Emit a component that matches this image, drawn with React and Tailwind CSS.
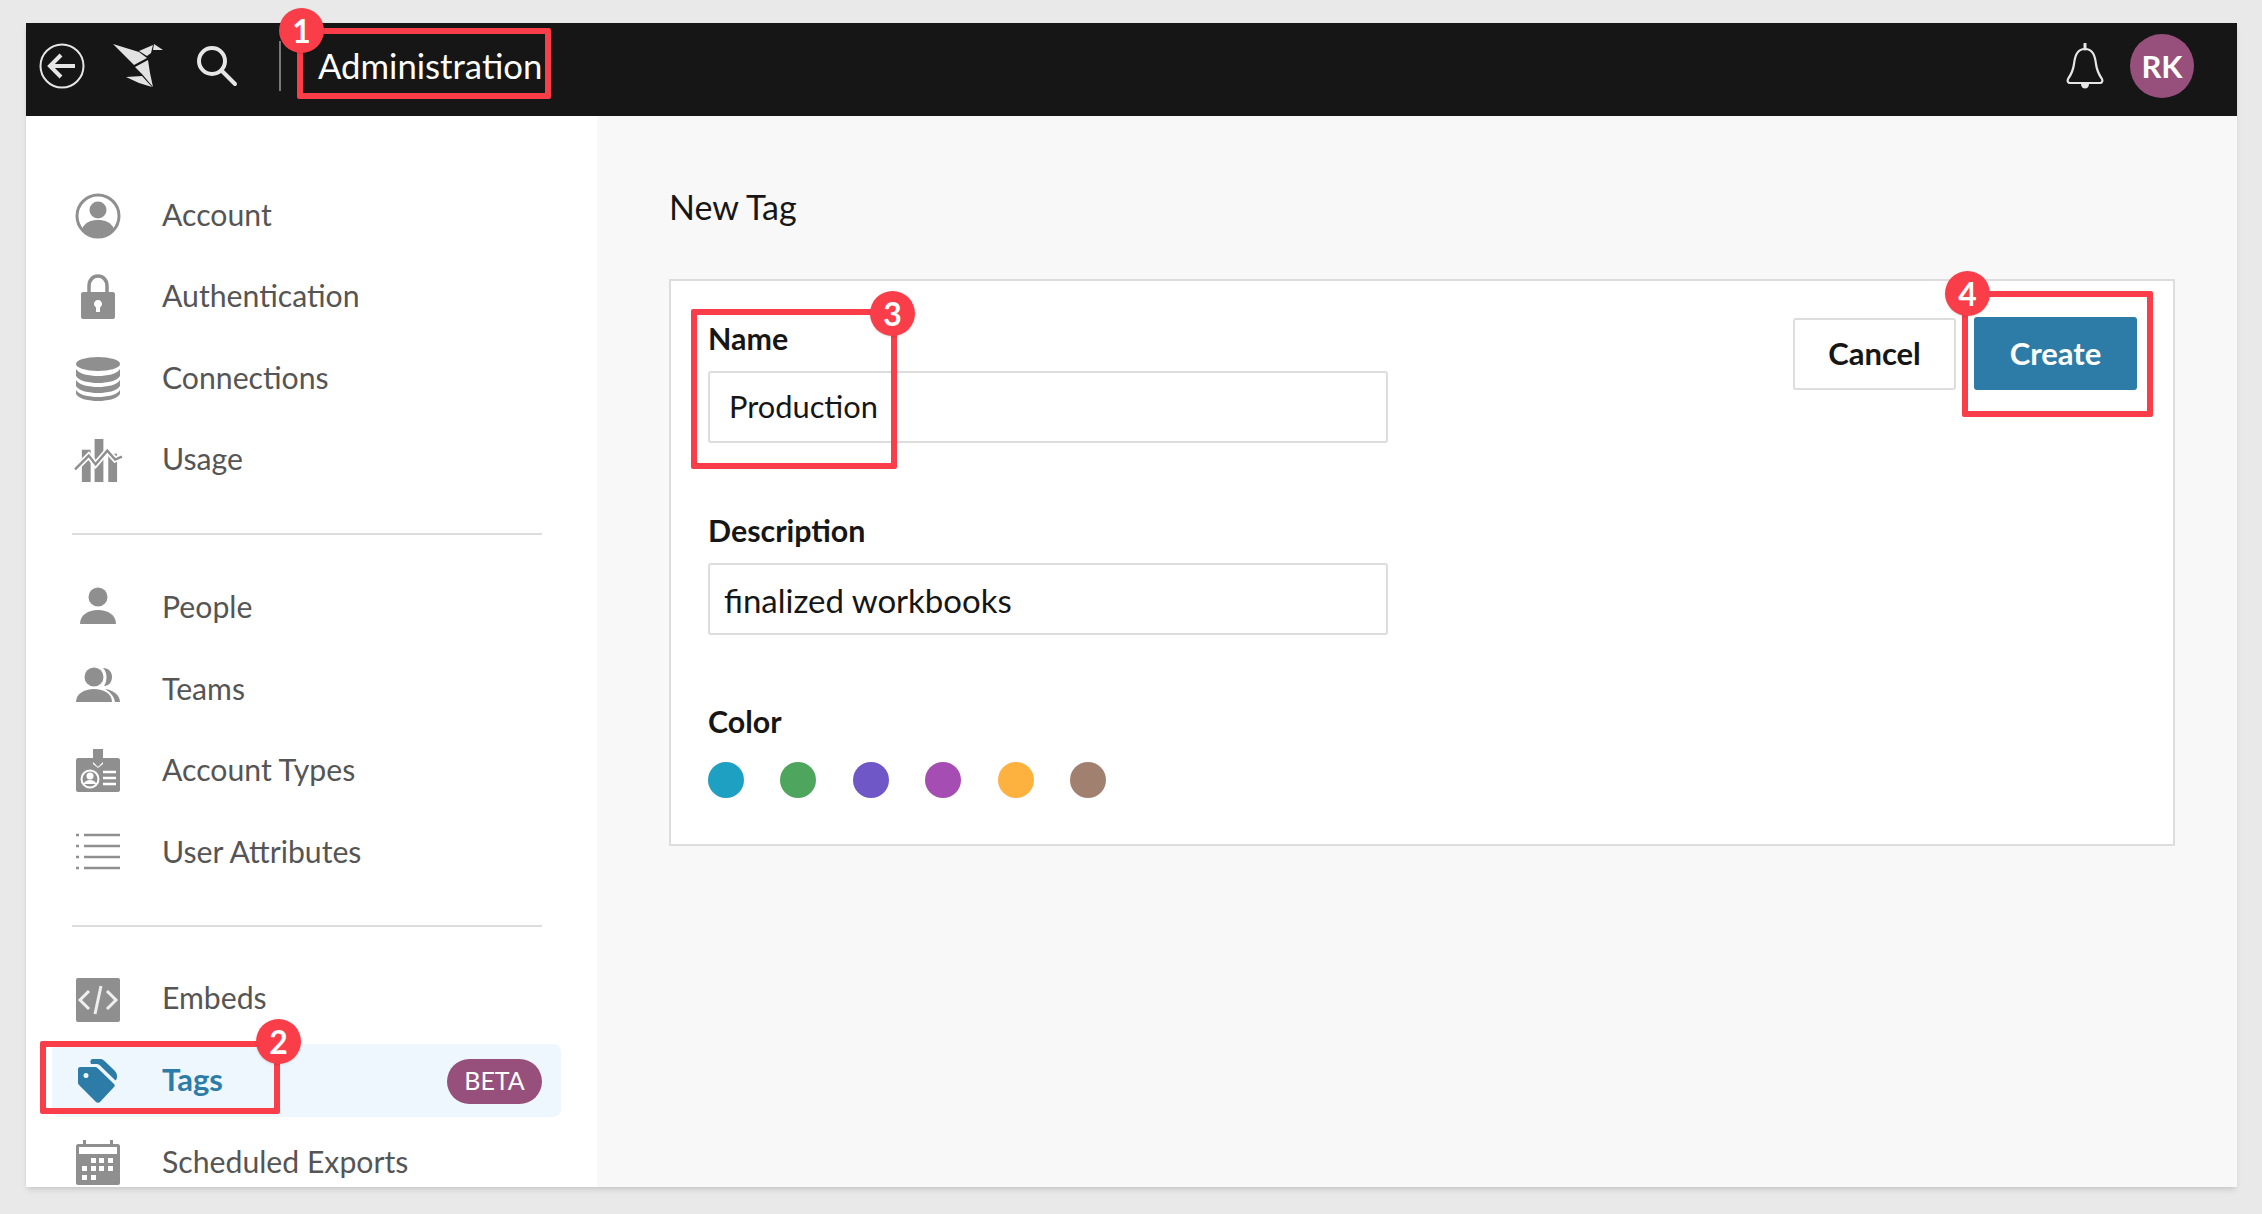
import React from 'react';

const FONT = "font-['Lato',sans-serif]";

const BackIcon = () => (
  <svg width="46" height="46" viewBox="0 0 46 46" fill="none" stroke="#e6e6e6">
    <circle cx="23" cy="23" r="21.5" strokeWidth="2" />
    <path d="M36 23H12M22 12L11 23L22 34" strokeWidth="4" />
  </svg>
);

const Logo = () => (
  <svg width="52" height="46" viewBox="0 0 52 46" fill="#e2e2e2">
    <path d="M1 1L27 9L35 15L22 22Z" />
    <path d="M27 8L41 2L39 10L35 13Z" />
    <path d="M42 1L51 7L41 7Z" />
    <path d="M23 24L36 17L38 30L41 44L30 31Z" />
    <path d="M14 34L30 33L40 44L27 40Z" />
  </svg>
);

const SearchIcon = () => (
  <svg width="42" height="42" viewBox="0 0 42 42" fill="none" stroke="#e6e6e6" strokeWidth="4" strokeLinecap="round">
    <circle cx="16" cy="16" r="13" />
    <path d="M26 26L39 39" />
  </svg>
);

const BellIcon = () => (
  <svg width="38" height="46" viewBox="0 0 38 46" fill="none" stroke="#e6e6e6" strokeWidth="2.2">
    <path d="M19 6C11 6 9 13 8 21C7 29 4 33 2 36C1 38 2 40 4 40H34C36 40 37 38 36 36C34 33 31 29 30 21C29 13 27 6 19 6Z" />
    <path d="M19 1V6" strokeWidth="3" strokeLinecap="round" />
    <path d="M15 41C15 47 23 47 23 41Z" fill="#e6e6e6" stroke="none" />
  </svg>
);

const AccountIcon = () => (
  <svg viewBox="0 0 46 46" className="w-[46px] h-[46px]">
    <circle cx="23" cy="23" r="21" fill="none" stroke="#8f8f8f" strokeWidth="3" />
    <circle cx="23" cy="17" r="8.5" fill="#8f8f8f" />
    <path d="M7 36C10 29 16 27 23 27C30 27 36 29 39 36C35 41 29 44 23 44C17 44 11 41 7 36Z" fill="#8f8f8f" />
  </svg>
);

const LockIcon = () => (
  <svg viewBox="0 0 46 46" className="w-[46px] h-[46px]">
    <path d="M14 20V12C14 6 18 2 23 2C28 2 32 6 32 12V20" fill="none" stroke="#8f8f8f" strokeWidth="3.5" />
    <path fillRule="evenodd" d="M8 18H38C39 18 40 19 40 20V43C40 44 39 45 38 45H8C7 45 6 44 6 43V20C6 19 7 18 8 18ZM23 26C20.500 26 19 28 19 30C19 31.500 20 32.800 21 33.400V38H25V33.400C26 32.800 27 31.500 27 30C27 28 25.500 26 23 26Z" fill="#8f8f8f" />
  </svg>
);

const DbIcon = () => (
  <svg viewBox="0 0 46 46" className="w-[46px] h-[46px]" fill="#8f8f8f">
    <ellipse cx="23" cy="8" rx="22" ry="7" />
    <path d="M1 13C4 18 14 20 23 20C32 20 42 18 45 13V20C42 25 32 27 23 27C14 27 4 25 1 20Z" />
    <path d="M1 24C4 29 14 31 23 31C32 31 42 29 45 24V30C42 35 32 37 23 37C14 37 4 35 1 30Z" />
    <path d="M1 34C4 39 14 41 23 41C32 41 42 39 45 34V38C42 43 32 45 23 45C14 45 4 43 1 38Z" />
  </svg>
);

const UsageIcon = () => (
  <svg viewBox="0 0 50 46" className="w-[49px] h-[45px] shrink-0">
    <g fill="#8f8f8f">
      <rect x="8" y="12" width="9" height="33" />
      <rect x="21" y="1" width="9" height="44" />
      <rect x="35" y="16" width="9" height="29" />
    </g>
    <path d="M1 32L15 18L22 27L34 13L42 22L49 19" fill="none" stroke="#fff" strokeWidth="6" />
    <path d="M1 32L15 18L22 27L34 13L42 22L49 19" fill="none" stroke="#8f8f8f" strokeWidth="2.500" />
  </svg>
);

const PersonIcon = () => (
  <svg viewBox="0 0 46 46" className="w-[46px] h-[46px]" fill="#8f8f8f">
    <circle cx="23" cy="12" r="9.500" />
    <path d="M5 39C5 30 13 25 23 25C33 25 41 30 41 39Z" />
  </svg>
);

const TeamsIcon = () => (
  <svg viewBox="0 0 46 46" className="w-[46px] h-[46px]" fill="#8f8f8f">
    <circle cx="19" cy="10" r="9.500" />
    <path d="M28 1C34 1 37 5 37 10C37 15 34 19 29 19C32 15 33 6 28 1Z" />
    <path d="M1 35C1 27 9 22 19 22C29 22 37 27 37 35Z" />
    <path d="M30 22C38 23 45 28 45 35H40C39 29 35 25 30 22Z" />
  </svg>
);

const BadgeIcon = () => (
  <svg viewBox="0 0 46 46" className="w-[46px] h-[46px]">
    <path fillRule="evenodd" fill="#8f8f8f" d="M3 10H18V16L23 20L28 16V10H43C44 10 45 11 45 12V42C45 43 44 44 43 44H3C2 44 1 43 1 42V12C1 11 2 10 3 10Z" />
    <path d="M18 1H28V14L23 19L18 14Z" fill="#8f8f8f" />
    <circle cx="15" cy="31" r="8.500" fill="none" stroke="#fff" strokeWidth="2" />
    <circle cx="15" cy="28" r="3.500" fill="#fff" />
    <path d="M8.500 36C10 33 12 32 15 32C18 32 20 33 21.500 36Z" fill="#fff" />
    <path d="M28 24H41M28 30H41M28 36H41" stroke="#fff" strokeWidth="2.500" />
  </svg>
);

const ListIcon = () => (
  <svg viewBox="0 0 46 46" className="w-[46px] h-[46px]" stroke="#8f8f8f" strokeWidth="2.500">
    <path d="M9 5H45M9 16H45M9 27H45M9 38H45" />
    <path d="M1 5H4M1 16H4M1 27H4M1 38H4" />
  </svg>
);

const EmbedIcon = () => (
  <svg viewBox="0 0 46 46" className="w-[46px] h-[46px]">
    <rect x="1" y="1" width="44" height="44" rx="2" fill="#8f8f8f" />
    <path d="M14 14L5 23L14 32M32 14L41 23L32 32M26 9L20 37" fill="none" stroke="#efefef" strokeWidth="3" />
  </svg>
);

const TagIcon = () => (
  <svg viewBox="0 0 46 46" className="w-[46px] h-[46px]" fill="#2d7ca8">
    <path fillRule="evenodd" d="M5 9H20C21 9 22 9.500 22.500 10L39 26C40 27 40 28 39 29L25 44C24 45 22 45 21 44L5 28C4 27 3 26 3 25V11C3 10 4 9 5 9ZM11 15A2.500 2.500 0 1 0 11 20A2.500 2.500 0 1 0 11 15Z" />
    <path d="M17 1H26C27 1 28 1.500 29 2.500L39 12C41 14 42 16 42 18C42 20 42 21 40.500 22.500L25 7.500C24 6.500 23 6 21 6H16C15 4 15 2 17 1Z" />
  </svg>
);

const CalendarIcon = () => (
  <svg viewBox="0 0 46 46" className="w-[46px] h-[46px]">
    <path d="M8 0H11V4H35V0H38V4H43C44 4 45 5 45 6V43C45 44 44 45 43 45H3C2 45 1 44 1 43V6C1 5 2 4 3 4H8Z" fill="#8f8f8f" />
    <rect x="4" y="7" width="38" height="7" fill="#fff" />
    <g fill="#fff">
      <rect x="16" y="18" width="5" height="5" />
      <rect x="24" y="18" width="5" height="5" />
      <rect x="33" y="18" width="5" height="5" />
      <rect x="7" y="26" width="5" height="5" />
      <rect x="16" y="26" width="5" height="5" />
      <rect x="24" y="26" width="5" height="5" />
      <rect x="33" y="26" width="5" height="5" />
      <rect x="7" y="35" width="5" height="5" />
      <rect x="16" y="35" width="5" height="5" />
    </g>
  </svg>
);

const NavRow = ({ icon, label }) => (
  <div className="h-[81.6px] flex items-center">
    <div className="w-[46px] ml-[49px] flex justify-center shrink-0">{icon}</div>
    <span className="ml-[41px] pb-[3px] text-[30.2px] text-[#555555]">{label}</span>
  </div>
);

const Divider = ({ className }) => <div className={`h-[2px] bg-[#dddddd] ml-[46px] mr-[55px] mb-[32px] ${className}`} />;

const Field = ({ label, value, inset, className }) => (
  <div className={className}>
    <div className="text-[30.4px] font-bold text-[#161616] leading-[40px]">{label}</div>
    <div className={`mt-[13px] w-[680px] h-[72px] border-2 border-[#dddddd] rounded-[3px] bg-white flex items-center text-[#161616] ${inset}`}>
      {value}
    </div>
  </div>
);

const Note = ({ n, className }) => (
  <div className={`absolute w-[45px] h-[45px] rounded-full bg-[#f93e4a] text-white text-[32px] font-bold flex items-center justify-center shadow-sm ${className}`}>
    {n}
  </div>
);

const NoteBox = ({ className }) => (
  <div className={`absolute border-[6px] border-[#f93e4a] rounded-[2px] ${className}`} />
);

const App = () => {
  return (
    <div className={`${FONT} relative w-[2262px] h-[1214px] bg-[#e9e9e9] pt-[23px] pl-[26px] overflow-hidden`}>
      <div className="w-[2211px] h-[1164px] flex flex-col overflow-hidden shadow-md">
        <header className="h-[93px] shrink-0 bg-[#161616] flex items-center pb-[7px] pl-[13px] pr-[43px]">
          <BackIcon />
          <div className="ml-[27px]"><Logo /></div>
          <div className="ml-[32px]"><SearchIcon /></div>
          <div className="ml-[41px] w-[2px] h-[50px] bg-[#777777]" />
          <span className="ml-[37px] text-[34.7px] text-white">Administration</span>
          <div className="ml-auto"><BellIcon /></div>
          <div className="ml-[26px] w-[64px] h-[64px] rounded-full bg-[#96507b] flex items-center justify-center text-white text-[31px] font-bold">RK</div>
        </header>
        <div className="flex flex-1 min-h-0">
          <aside className="w-[571px] shrink-0 bg-white pt-[59px] overflow-hidden">
            <NavRow icon={<AccountIcon />} label="Account" />
            <NavRow icon={<LockIcon />} label="Authentication" />
            <NavRow icon={<DbIcon />} label="Connections" />
            <NavRow icon={<UsageIcon />} label="Usage" />
            <Divider className="mt-[32px]" />
            <NavRow icon={<PersonIcon />} label="People" />
            <NavRow icon={<TeamsIcon />} label="Teams" />
            <NavRow icon={<BadgeIcon />} label="Account Types" />
            <NavRow icon={<ListIcon />} label="User Attributes" />
            <Divider className="mt-[31px]" />
            <NavRow icon={<EmbedIcon />} label="Embeds" />
            <div className="h-[81.6px] flex items-center relative">
              <div className="absolute left-[26px] right-[36px] top-[4px] h-[73px] bg-[#eef7fe] rounded-[8px]" />
              <div className="relative w-[46px] ml-[49px] flex justify-center shrink-0"><TagIcon /></div>
              <span className="relative ml-[41px] pb-[3px] text-[31px] font-bold text-[#2d7ca8]">Tags</span>
              <span className="relative ml-auto mr-[55px] w-[95px] h-[45px] rounded-full bg-[#96507b] text-white text-[25px] flex items-center justify-center">BETA</span>
            </div>
            <NavRow icon={<CalendarIcon />} label="Scheduled Exports" />
          </aside>
          <main className="flex-1 bg-[#f8f8f8] pl-[72px] pr-[62px] pt-[68px]">
            <h1 className="text-[34px] leading-[46px] text-[#161616]">New Tag</h1>
            <section className="mt-[49px] h-[567px] bg-white border-2 border-[#dddddd] relative pl-[37px] pt-[37px]">
              <Field label="Name" value="Production" inset="pl-[19px] text-[30.8px]" />
              <Field label="Description" value="finalized workbooks" inset="pl-[14px] pt-[3px] text-[33px]" className="mt-[67px]" />
              <div className="mt-[66px] text-[30.4px] font-bold text-[#161616] leading-[40px]">Color</div>
              <div className="mt-[21px] flex gap-[36.4px]">
                <span className="w-[36px] h-[36px] rounded-full bg-[#1ea0c3]" />
                <span className="w-[36px] h-[36px] rounded-full bg-[#4ea55e]" />
                <span className="w-[36px] h-[36px] rounded-full bg-[#6f57c8]" />
                <span className="w-[36px] h-[36px] rounded-full bg-[#a64db3]" />
                <span className="w-[36px] h-[36px] rounded-full bg-[#fdb240]" />
                <span className="w-[36px] h-[36px] rounded-full bg-[#a18070]" />
              </div>
              <div className="absolute right-[36px] top-[36px] flex items-center gap-[18px]">
                <button className="w-[163px] h-[72px] bg-white border-2 border-[#dddddd] rounded-[3px] text-[31px] font-bold text-[#161616]">Cancel</button>
                <button className="w-[163px] h-[73px] bg-[#2d7ca8] rounded-[3px] text-[31px] font-bold text-white">Create</button>
              </div>
            </section>
          </main>
        </div>
      </div>
      <NoteBox className="left-[297px] top-[28px] w-[254px] h-[71px]" />
      <Note n="1" className="left-[279px] top-[8px]" />
      <NoteBox className="left-[40px] top-[1041px] w-[240px] h-[73px]" />
      <Note n="2" className="left-[256px] top-[1019px]" />
      <NoteBox className="left-[691px] top-[309px] w-[206px] h-[160px]" />
      <Note n="3" className="left-[870px] top-[291px]" />
      <NoteBox className="left-[1962px] top-[291px] w-[191px] h-[126px]" />
      <Note n="4" className="left-[1945px] top-[271px]" />
    </div>
  );
};

export default App;
